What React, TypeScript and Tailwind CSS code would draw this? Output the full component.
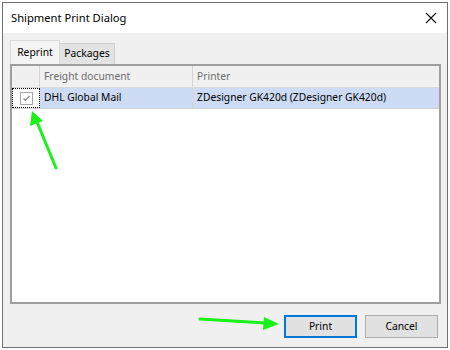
import React from 'react';

const font = { fontFamily: '"Noto Sans", "Open Sans", sans-serif' };

function Arrows() {
  // green annotation arrows drawn over the dialog
  return (
    <svg className="absolute left-0 top-0 pointer-events-none" width="450" height="350" viewBox="0 0 450 350">
      <line x1="56" y1="168" x2="37" y2="122" stroke="#19f219" strokeWidth="3" strokeLinecap="round" />
      <polygon points="32,111 43,121 30,126" fill="#19f219" />
      <line x1="200" y1="319" x2="266" y2="323" stroke="#19f219" strokeWidth="3" strokeLinecap="round" />
      <polygon points="279,324 264,317 263,330" fill="#19f219" />
    </svg>
  );
}

export default function App() {
  return (
    <div className="relative w-[450px] h-[350px] bg-white text-[10.3px] text-[#1a1a1a]" style={font}>
      <div className="absolute left-[2px] top-[2px] w-[446px] h-[346px] border border-[#707070] flex flex-col bg-[#f0f0f0]">
        {/* title bar */}
        <div className="h-[30px] bg-white flex items-center justify-between pl-[8px] pr-[10px] shrink-0">
          <span className="text-[11.2px] text-black">Shipment Print Dialog</span>
          <svg width="12" height="12" viewBox="0 0 12 12">
            <path d="M1 1 L11 11 M11 1 L1 11" stroke="#111" strokeWidth="1.1" />
          </svg>
        </div>

        <div className="flex-1 flex flex-col pl-[7px] pr-[5px] pt-[7px] pb-[9px]">
          {/* tabs */}
          <div className="flex items-end h-[24px]">
            <div className="w-[50px] h-[24px] flex items-center justify-center border border-b-0 border-[#d9d9d9] bg-[#f4f4f4] text-black">
              Reprint
            </div>
            <div className="w-[55px] h-[21px] flex items-center justify-center border border-l-0 border-b-0 border-[#d0d0d0] bg-[#e3e3e3] text-black">
              Packages
            </div>
          </div>

          {/* grid */}
          <div className="w-[431px] h-[240px] border-2 border-[#9e9e9e] bg-white flex flex-col">
            <div className="flex h-[22px] bg-[#f0f0f0] border-b border-[#dadada] text-[#6d6d6d]">
              <div className="w-[28px] border-r border-[#d5d5d5]"></div>
              <div className="w-[153px] border-r border-[#d5d5d5] pl-[4px] flex items-center">Freight document</div>
              <div className="flex-1 pl-[4px] flex items-center">Printer</div>
            </div>
            <div className="flex h-[21px] bg-[#cddcf4] border-b border-[#d3d3d3]">
              <div className="w-[28px] border border-dotted border-black flex items-center justify-center bg-white">
                <div className="w-[13px] h-[13px] border border-[#a6a6a6] flex items-center justify-center bg-white">
                  <svg width="9" height="9" viewBox="0 0 9 9">
                    <path d="M1.5 4.5 L3.5 6.5 L7.5 2" stroke="#8a8a8a" strokeWidth="1.2" fill="none" />
                  </svg>
                </div>
              </div>
              <div className="w-[153px] border-r border-[#d5d5d5] pl-[4px] flex items-center text-black">DHL Global Mail</div>
              <div className="flex-1 pl-[4px] flex items-center text-black">ZDesigner GK420d (ZDesigner GK420d)</div>
            </div>
          </div>

          <div className="flex-1"></div>

          {/* buttons */}
          <div className="flex justify-end gap-[8px] pr-[4px]">
            <button className="w-[73px] h-[23px] border-2 border-[#0078d7] bg-[#e1e1e1] text-black">Print</button>
            <button className="w-[73px] h-[23px] border border-[#adadad] bg-[#e1e1e1] text-black">Cancel</button>
          </div>
        </div>
      </div>
      <Arrows />
    </div>
  );
}
